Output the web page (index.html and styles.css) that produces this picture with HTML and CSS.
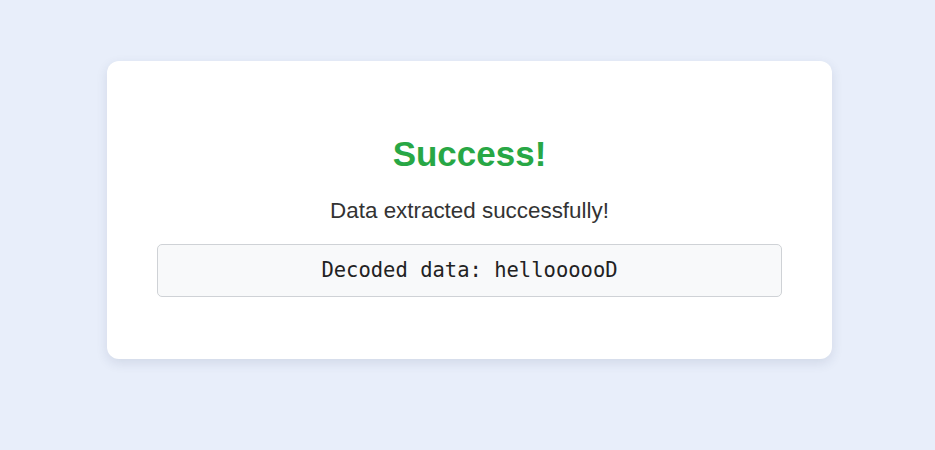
FILE: index.html
```html
<!DOCTYPE html>
<html lang="en">
<head>
<meta charset="utf-8">
<title>Success</title>
<link rel="stylesheet" href="styles.css">
</head>
<body>
  <main class="card">
    <h1 class="title">Success!</h1>
    <p class="message">Data extracted successfully!</p>
    <div class="result">Decoded data: helloooooD</div>
  </main>
</body>
</html>
```
FILE: styles.css
```css
html, body {
  margin: 0;
  padding: 0;
}
body {
  background: #e8eefa;
  font-family: "Liberation Sans", Arial, sans-serif;
  min-height: 450px;
  padding-top: 61px;
  box-sizing: border-box;
}
.card {
  display: block;
  width: 725px;
  box-sizing: border-box;
  margin-left: 107px;
  background: #ffffff;
  border-radius: 12px;
  box-shadow: 0 4px 12px rgba(40, 60, 100, 0.12);
  padding: 73px 50px 62px;
  text-align: center;
}
.title {
  margin: 0;
  font-size: 35px;
  line-height: 40px;
  font-weight: bold;
  color: #28a745;
}
.message {
  margin: 24px 0 20px;
  font-size: 22.4px;
  line-height: 26px;
  color: #333333;
}
.result {
  background: #f8f9fa;
  border: 1px solid #cfd2d6;
  border-radius: 5px;
  padding: 13px 10px;
  font-family: "DejaVu Sans Mono", "Liberation Mono", monospace;
  font-size: 20.5px;
  line-height: 25px;
  color: #222222;
}
```
